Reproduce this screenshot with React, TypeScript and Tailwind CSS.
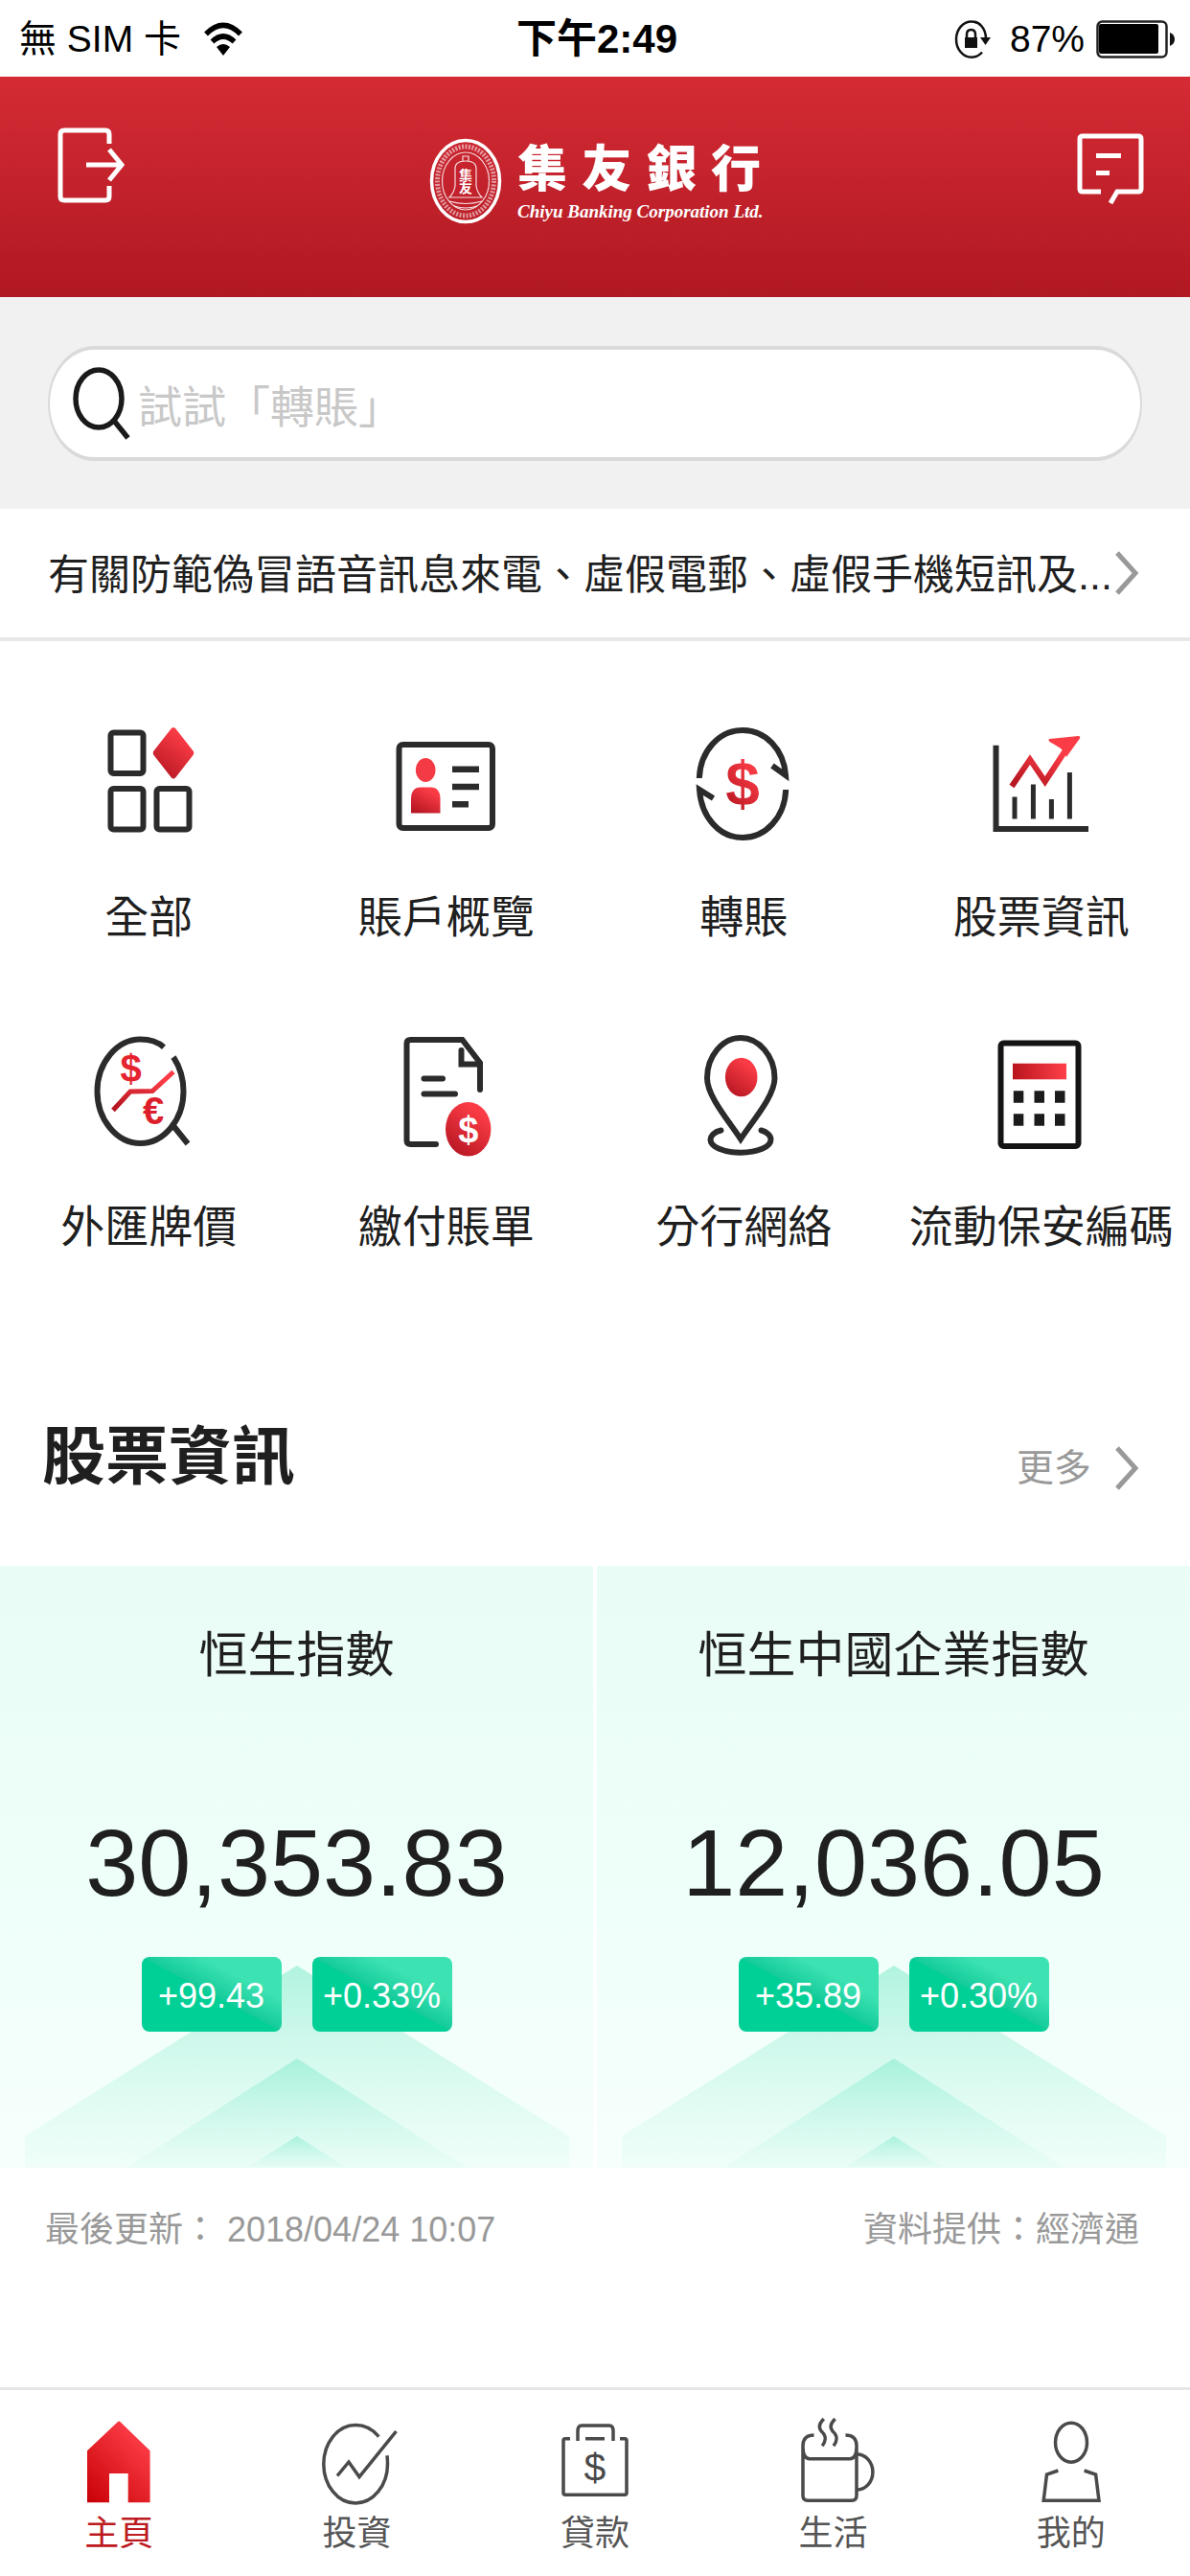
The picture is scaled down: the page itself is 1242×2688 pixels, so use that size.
import type { ReactNode } from "react";

interface IconLinkProps {
    label: string;
    icon: ReactNode;
}

interface IndexCardProps {
    name: string;
    value: string;
    change: string;
    percent: string;
}

const shortcuts: IconLinkProps[] = [
    {
        label: "全部",
        icon: (
            <>
                <rect x="25.5" y="16.5" width="34" height="42.5" rx="3" />
                <rect x="25.5" y="75" width="34" height="42.5" rx="3" />
                <rect x="73.5" y="75" width="34" height="42.5" rx="3" />
                <path d="M88.5 12.500q2.500-3 5 0l18 23q1.500 2.200 0 4.500l-18 23q-2.500 3-5 0l-18-23q-1.500-2.300 0-4.500z" fill="url(#red)" stroke="none" />
            </>
        ),
    },
    {
        label: "賬戶概覽",
        icon: (
            <>
                <rect x="15.500" y="29" width="97.500" height="87" rx="4" />
                <ellipse cx="43.200" cy="55.500" rx="10.300" ry="12.500" fill="#f43a44" stroke="none" />
                <path d="M28 100.500V86q0-12.500 10-12.500h10.500q10 0 10 12.500v14.500z" fill="url(#red)" stroke="none" />
                <path d="M71 54.700h28M71 73h28M71 91.200h17" strokeWidth="6.500" />
            </>
        ),
    },
    {
        label: "轉賬",
        icon: (
            <>
                <path d="M18.800 64C20 35 40 14 64 14s43 20 45 47L95 51" />
                <path d="M109.200 76C108 105 88 126 64 126S21 105 19 76l14.500 9" />
                <text x="64" y="92" textAnchor="middle" fontSize="64" fontWeight="bold" fill="url(#red)" stroke="none">$</text>
            </>
        ),
    },
    {
        label: "股票資訊",
        icon: (
            <>
                <path d="M17.500 29.700v87.300H114" />
                <path d="M37 83.500v23M56.400 70.500v36M75.400 86v20.500M94.400 58v48.500" strokeWidth="5" />
                <path d="M34 72.500l19-28 15.700 23L94 29" stroke="url(#red)" strokeWidth="6" />
                <path d="M73.500 23l30-3q2.500 0 1.500 2.500L91 42q-2-6-6-9-6-4-11.500-7-2-2 0-3z" fill="#fa3c46" stroke="none" />
            </>
        ),
    },
    {
        label: "外匯牌價",
        icon: (
            <>
                <path d="M81 21.700C74 15.500 66 13.500 56.500 13.500 32 13.500 11.500 38 11.500 67.700S32 122 56.500 122s45-24.500 45-54.300C101.500 54 97.500 42 91 32M89.500 102l16.500 20.500" />
                <path d="M28 87.500L46 68l23-.5L91 47.500" stroke="url(#red)" strokeWidth="5" />
                <text x="46.500" y="58" textAnchor="middle" fontSize="40" fontWeight="bold" fill="#e5242f" stroke="none">$</text>
                <text x="70" y="102" textAnchor="middle" fontSize="40" fontWeight="bold" fill="#dc1f2b" stroke="none">€</text>
            </>
        ),
    },
    {
        label: "繳付賬單",
        icon: (
            <>
                <path d="M54 123H27.500q-4 0-4-4V18q0-4 4-4h54L100 38v28" strokeLinecap="round" />
                <path d="M80.500 25v14.500H100M41.500 54.500H61M41.500 70.500H74" strokeLinecap="round" />
                <ellipse cx="87.700" cy="107.300" rx="23.700" ry="28.300" fill="url(#red)" stroke="none" />
                <text x="87.700" y="120.500" textAnchor="middle" fontSize="38" fontWeight="bold" fill="#fff" stroke="none">$</text>
            </>
        ),
    },
    {
        label: "分行網絡",
        icon: (
            <>
                <path d="M62 117.500C50 99 27 73 27 54 27 31 43 12 62 12s35.500 19 35.500 42C97.500 73 74 99 62 117.500z" />
                <ellipse cx="62.700" cy="53" rx="16.800" ry="20.300" fill="url(#red)" stroke="none" />
                <path d="M41.500 108.500C34 110 30.500 115 30.500 118c0 8 14 13.700 31.500 13.700s31.500-5.700 31.500-13.700c0-4-4-8-10-9.500" strokeLinecap="round" />
            </>
        ),
    },
    {
        label: "流動保安編碼",
        icon: (
            <>
                <rect x="22.500" y="17.500" width="81" height="107.500" rx="3" stroke="#141414" />
                <rect x="35" y="38.700" width="56" height="16.600" fill="url(#redAcross)" stroke="none" />
                <path d="M35.800 73.500h10.500M57.500 73.500H68M79 73.500h10.500M35.800 97.500h10.500M57.500 97.500H68M79 97.500h10.500" stroke="#1b1b1b" strokeWidth="12.500" />
            </>
        ),
    },
];

const indices: IndexCardProps[] = [
    { name: "恒生指數", value: "30,353.83", change: "+99.43", percent: "+0.33%" },
    { name: "恒生中國企業指數", value: "12,036.05", change: "+35.89", percent: "+0.30%" },
];

const tabs: IconLinkProps[] = [
    {
        label: "主頁",
        icon: <path d="M43.500 7.500q1.700-2 3.400 0L77.600 37.300v54H54.700V61H35v30.300H12v-54z" fill="url(#home)" stroke="none" />,
    },
    {
        label: "投資",
        icon: (
            <>
                <path d="M67.300 22.700C60.500 14 53 10.500 43 10.500 24.500 10.500 9.800 29 9.800 51.200S24.500 92 43 92s33.500-18.500 33.500-40.800q0-5-.5-9" />
                <path d="M24 63.500l12-14.500 11 15.500L85.500 17" />
            </>
        ),
    },
    {
        label: "貸款",
        icon: (
            <>
                <path d="M19 24.700h-5q-2 0-2 2v54.600q0 2 2 2h62q2 0 2-2V26.700q0-2-2-2h-5M35 24.700h20" />
                <path d="M27 27V17q0-6 4-6h29q4 0 4 6v10" />
                <text x="45" y="69" textAnchor="middle" fontSize="41" fill="#4a4a4a" stroke="none">$</text>
            </>
        ),
    },
    {
        label: "生活",
        icon: (
            <>
                <path d="M25.500 21Q14 21 14 32v52q0 5.300 5 5.300h46q5 0 5-5.300V32q0-11-11.500-11M14 33q0 12.700 7 12.700h42q7 0 7-12.700" />
                <path d="M70.500 41c9 0 16.400 8 16.400 18.500s-7.400 18.500-16.400 18.500" />
                <path d="M35.800 4c-5 5-6 9-2.500 13 5 4.500 5.500 9 .9 15.300M47.600 4c-5 5-6 9-2.500 13 5 4.500 5.500 9 .9 15.300" />
            </>
        ),
    },
    {
        label: "我的",
        icon: (
            <>
                <ellipse cx="45" cy="28.700" rx="16.500" ry="20.500" />
                <path d="M31.400 58L19.500 62l-3.300 27.300H74L70.600 62l-12-4" />
            </>
        ),
    },
];

function Gradients() {
    return (
        <svg className="absolute size-0" aria-hidden="true">
            <defs>
                <linearGradient id="red" x1="0.8" y1="0" x2="0.2" y2="1">
                    <stop offset="0.15" stopColor="#fb3c46" />
                    <stop offset="1" stopColor="#b51622" />
                </linearGradient>
                <linearGradient id="redAcross" x1="0" y1="0" x2="1" y2="0">
                    <stop offset="0" stopColor="#b9141f" />
                    <stop offset="1" stopColor="#ff404a" />
                </linearGradient>
                <linearGradient id="home" x1="0.8" y1="0" x2="0" y2="1">
                    <stop offset="0.1" stopColor="#fb3c46" />
                    <stop offset="1" stopColor="#c80005" />
                </linearGradient>
                <linearGradient id="peak" x1="0" y1="0" x2="0" y2="1">
                    <stop offset="0" stopColor="#8eedd0" stopOpacity="0.65" />
                    <stop offset="1" stopColor="#c8f7e9" stopOpacity="0.15" />
                </linearGradient>
            </defs>
        </svg>
    );
}

function StatusBar() {
    return (
        <div className="grid h-20 grid-cols-[1fr_auto_1fr] items-center pl-5 pr-4 text-[39px] leading-[48px] text-black">
            <div className="flex items-center gap-6 pt-[2px]">
                <span>無 SIM 卡</span>
                <svg viewBox="0 0 40 36" className="h-9 w-10" fill="none" stroke="#000" strokeWidth="5.500">
                    <path d="M2 12.500Q20-5.500 38 12.500M8.500 20.500q11.500-11 23 0" />
                    <path d="M20 35l-7-9q7-6 14 0z" fill="#000" stroke="none" />
                </svg>
            </div>
            <span className="pt-[2px] text-[42px] font-bold">下午2:49</span>
            <div className="flex items-center justify-end pt-[2px]">
                <svg viewBox="0 0 38 40" className="mr-5 h-10 w-[38px]" fill="none" stroke="#111" strokeWidth="2.500">
                    <path d="M29 33.500C26 37 22 38.700 18 38.700 9 38.700 2 30.500 2 20S9 1.500 18 1.500c8.500 0 14.500 7 15 17" />
                    <path d="M27 18h11l-5.500 8z" fill="#111" stroke="none" />
                    <rect x="11" y="18" width="13" height="11" fill="#111" stroke="none" />
                    <path d="M13 19v-4q0-5 4.500-5t4.500 5v4" />
                </svg>
                <span className="mr-3">87%</span>
                <svg viewBox="0 0 82 40" className="h-10 w-[82px]">
                    <rect x="1.500" y="1.500" width="72" height="37" rx="5" fill="#fff" stroke="#222" strokeWidth="2.500" />
                    <rect x="3" y="4" width="62" height="31" rx="2" fill="#000" />
                    <path d="M77 13q5 2 5 7t-5 7z" fill="#111" />
                </svg>
            </div>
        </div>
    );
}

function Logo() {
    return (
        <div className="mt-3 flex items-start gap-4 text-white">
            <svg viewBox="0 0 76 90" className="h-[90px] w-[76px]" fill="none" stroke="#fff">
                <ellipse cx="38" cy="45" rx="35.500" ry="42.500" strokeWidth="3.500" />
                <ellipse cx="38" cy="45" rx="29.500" ry="36" strokeWidth="5" strokeDasharray="2 1.500" opacity="0.55" />
                <ellipse cx="38" cy="45" rx="24.500" ry="30" strokeWidth="1.200" opacity="0.8" />
                <path d="M35 24v-5h6v5M27 50V32q0-8 11-8t11 8v18q1 7 6 12H21q5-5 6-12zM21 66q17 5 34 0M26 71q12 4 24 0" strokeWidth="1.200" opacity="0.85" />
                <text x="38" y="44" textAnchor="middle" fontSize="14" fontWeight="bold" fill="#fff" stroke="none">集</text>
                <text x="38" y="57" textAnchor="middle" fontSize="14" fontWeight="bold" fill="#fff" stroke="none">友</text>
            </svg>
            <div className="w-[254px]">
                <p className="text-[52px] font-black leading-[66px] [text-align-last:justify]">集友銀行</p>
                <p className="whitespace-nowrap font-['Liberation_Serif',serif] text-[19px] font-bold italic leading-[22px]">Chiyu Banking Corporation Ltd.</p>
            </div>
        </div>
    );
}

function Header() {
    return (
        <header className="grid h-[230px] grid-cols-[1fr_auto_1fr] items-start bg-linear-to-b from-[#d52b35] to-[#b01822] px-12 pt-[52px]">
            <button type="button" aria-label="登出" className="ml-3 justify-self-start">
                <svg viewBox="0 0 70 80" className="h-20 w-[70px]" fill="none" stroke="#fff" strokeWidth="5">
                    <path d="M54 18V8q0-4-4-4H7Q3 4 3 8v65q0 4 4 4h43q4 0 4-4V62M30 40h37M54 24l13 16-13 16" />
                </svg>
            </button>
            <Logo />
            <button type="button" aria-label="訊息" className="mt-[6px] justify-self-end">
                <svg viewBox="0 0 70 76" className="h-[76px] w-[70px]" fill="none" stroke="#fff" strokeWidth="5">
                    <path d="M25 62H6q-3 0-3-3V7q0-3 3-3h58q3 0 3 3v52q0 3-3 3H42l-7 12M20 24.500h26M20 42.500h14" />
                </svg>
            </button>
        </header>
    );
}

function Chevron() {
    return (
        <svg viewBox="0 0 26 46" className="h-[46px] w-[26px] shrink-0" fill="none" stroke="#999" strokeWidth="5">
            <path d="M3 2l19 21L3 44" />
        </svg>
    );
}

function IndexCard({ name, value, change, percent }: IndexCardProps) {
    return (
        <article className="relative flex flex-col items-center bg-linear-to-b from-[#e9fcf5] via-[#eefff9] to-[#f6fffc] pb-[142px] pt-[62px]">
            {/* rising peaks behind the change badges */}
            <div className="absolute inset-x-0 bottom-0 flex justify-center">
                <svg viewBox="0 0 568 211" className="h-[211px] w-[568px]" fill="url(#peak)">
                    <path d="M284 0l284 178v33H0v-33z" />
                    <path d="M284 97l178 114H106z" />
                    <path d="M284 178l52 33H232z" />
                </svg>
            </div>
            <h3 className="relative text-[51px] leading-[64px]">{name}</h3>
            <p className="relative mt-[134px] text-[99px] leading-[100px]">{value}</p>
            <div className="relative mt-12 flex gap-8 text-[36px] text-white">
                <span className="flex h-[78px] w-[146px] items-center justify-center rounded-lg bg-[linear-gradient(to_top_right,#00cf96_50%,#14cb9a_50%,#3de2b2_72%)] pt-1">{change}</span>
                <span className="flex h-[78px] w-[146px] items-center justify-center rounded-lg bg-[linear-gradient(to_top_right,#00cf96_50%,#14cb9a_50%,#3de2b2_72%)] pt-1">{percent}</span>
            </div>
        </article>
    );
}

export default function App() {
    return (
        <div className="w-full bg-white font-['Liberation_Sans','Noto_Sans_CJK_TC',sans-serif] text-[#1f1f1f]">
            <Gradients />
            <StatusBar />
            <Header />

            <form className="bg-[#f1f1f1] px-[50px] pb-[50px] pt-[51px]" onSubmit={(e) => e.preventDefault()}>
                <label className="flex h-[120px] items-center gap-[6px] rounded-[48px/60px] border-x-2 border-y-4 border-[#dadada] bg-white pl-6 pr-10">
                    <svg viewBox="0 0 62 76" className="h-[76px] w-[62px] shrink-0" fill="none" stroke="#1a1a1a" strokeWidth="5.500">
                        <ellipse cx="27" cy="33" rx="24" ry="30" />
                        <path d="M43 56l14.500 18" />
                    </svg>
                    <input type="text" name="keyword" aria-label="搜尋" placeholder="試試「轉賬」" className="h-20 min-w-0 flex-1 pt-2 text-[46px] outline-none placeholder:text-[#c8c8c8]" />
                </label>
            </form>

            <a href="#notice" className="flex h-[138px] items-center border-b-4 border-[#e8e8e8] pl-[50px] pr-[53px] text-[43px] leading-[60px]">
                <span className="min-w-0 flex-1 whitespace-nowrap pt-1">有關防範偽冒語音訊息來電、虛假電郵、虛假手機短訊及...</span>
                <Chevron />
            </a>

            <main>
                <nav className="grid grid-cols-4 gap-y-[84px] pt-[79px]">
                    {shortcuts.map(({ label, icon }) => (
                        <a key={label} href="#shortcut" className="flex flex-col items-center">
                            <svg viewBox="0 0 130 140" className="h-[140px] w-[130px]" fill="none" stroke="#2b2b2b" strokeWidth="6">
                                {icon}
                            </svg>
                            <span className="mt-[39px] whitespace-nowrap text-[46px] leading-[60px]">{label}</span>
                        </a>
                    ))}
                </nav>

                <section className="pt-[170px]">
                    <div className="flex items-end justify-between pb-[74px] pl-11 pr-[53px]">
                        <h2 className="text-[66px] font-bold leading-[80px]">股票資訊</h2>
                        <a href="#more" className="flex items-center gap-6 text-[39px] leading-[56px] text-[#999]">
                            更多
                            <Chevron />
                        </a>
                    </div>
                    <div className="grid grid-cols-2 gap-1">
                        {indices.map((item) => (
                            <IndexCard key={item.name} {...item} />
                        ))}
                    </div>
                    <div className="flex justify-between pb-[140px] pl-[47px] pr-[53px] pt-[41px] text-[36px] leading-[48px] text-[#999]">
                        <p>最後更新： 2018/04/24 10:07</p>
                        <p>資料提供：經濟通</p>
                    </div>
                </section>
            </main>

            <nav className="grid grid-cols-5 border-t-[3px] border-[#e6e6e6] pb-5 pt-[26px]">
                {tabs.map(({ label, icon }, i) => (
                    <a key={label} href="#tab" className={`flex flex-col items-center text-[36px] leading-[48px] ${i === 0 ? "text-[#bd1a22]" : "text-[#555]"}`}>
                        <svg viewBox="0 0 90 100" className="h-[100px] w-[90px]" fill="none" stroke="#4a4a4a" strokeWidth="3.500">
                            {icon}
                        </svg>
                        {label}
                    </a>
                ))}
            </nav>
        </div>
    );
}
